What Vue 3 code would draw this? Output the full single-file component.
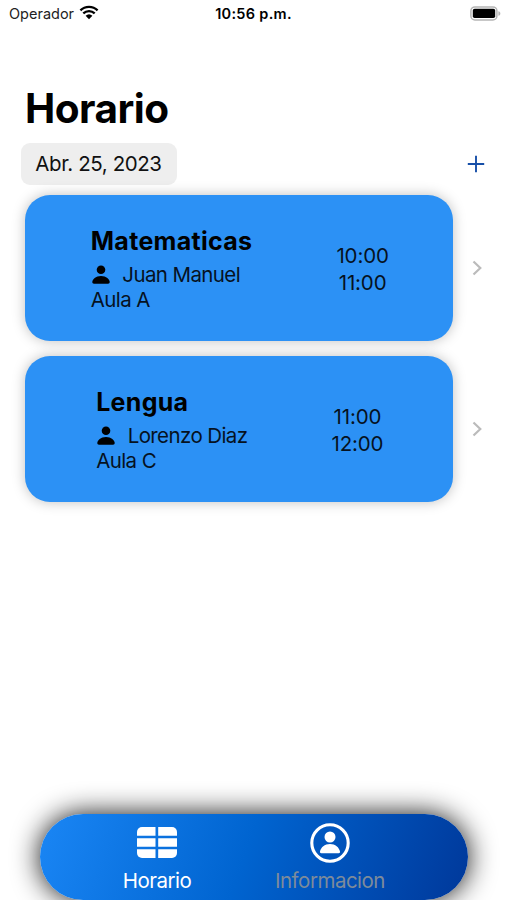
<script setup>
import { ref } from "vue";

const clases = ref([
  { materia: "Matematicas", profesor: "Juan Manuel", aula: "Aula A", inicio: "10:00", fin: "11:00" },
  { materia: "Lengua", profesor: "Lorenzo Diaz", aula: "Aula C", inicio: "11:00", fin: "12:00" },
]);

const tab = ref("horario");
</script>

<template>
  <div class="screen">
    <div class="status-bar">
      <div class="carrier">
        <span>Operador</span>
        <svg class="wifi" viewBox="0 0 20 15">
          <path d="M1.4 5.3a12.4 12.4 0 0 1 17.2 0" />
          <path d="M4.3 8.4a8.2 8.2 0 0 1 11.4 0" />
          <path class="dot" d="M10 14.3 6.6 10.8a5 5 0 0 1 6.8 0z" />
        </svg>
      </div>
      <span class="clock">10:56 p.m.</span>
      <svg class="battery" viewBox="0 0 31 15">
        <rect class="shell" x="0.9" y="0.9" width="26" height="13" rx="4" />
        <rect x="2.8" y="2.8" width="22.4" height="9.2" rx="1.8" />
        <path class="cap" d="M28.4 5.2c2.6.7 2.6 3.9 0 4.6z" />
      </svg>
    </div>

    <h1 class="title">Horario</h1>

    <div class="toolbar">
      <button class="date">Abr. 25, 2023</button>
      <button class="add">
        <svg viewBox="0 0 18 18">
          <path d="M9 .8v16.4M.8 9h16.4" />
        </svg>
      </button>
    </div>

    <div class="list">
      <div v-for="clase in clases" :key="clase.materia" class="row">
        <div class="card">
          <div class="info">
            <h2 class="subject">{{ clase.materia }}</h2>
            <div class="teacher">
              <svg viewBox="0 0 18 19">
                <circle cx="9" cy="4.7" r="4.3" />
                <path d="M2 18.7C.9 18.7.3 18 .3 17c0-2.7 3.5-6 8.7-6s8.7 3.3 8.7 6c0 1-.6 1.7-1.7 1.7z" />
              </svg>
              <span>{{ clase.profesor }}</span>
            </div>
            <div class="room">{{ clase.aula }}</div>
          </div>
          <div class="hours">
            <span>{{ clase.inicio }}</span>
            <span>{{ clase.fin }}</span>
          </div>
        </div>
        <svg class="chevron" viewBox="0 0 10 16">
          <path d="M1.5 1.5 8.3 8l-6.8 6.5" />
        </svg>
      </div>
    </div>

    <nav class="tab-bar">
      <button :class="['tab', { active: tab === 'horario' }]" @click="tab = 'horario'">
        <svg class="grid-icon" viewBox="0 0 40 31">
          <path d="M5 0h13.5v8.7H0V5a5 5 0 0 1 5-5z" />
          <path d="M21.2 0H35a5 5 0 0 1 5 5v3.7H21.2z" />
          <path d="M0 11.2h18.5v8.6H0zM21.2 11.2H40v8.6H21.2z" />
          <path d="M0 22.3h18.5V31H5a5 5 0 0 1-5-5z" />
          <path d="M21.2 22.3H40V26a5 5 0 0 1-5 5H21.2z" />
        </svg>
        <span>Horario</span>
      </button>
      <button :class="['tab', 'wide', { active: tab === 'informacion' }]" @click="tab = 'informacion'">
        <svg class="person-icon" viewBox="0 0 40 40">
          <circle class="ring" cx="20" cy="20" r="18.2" />
          <circle cx="20" cy="14" r="5.5" />
          <path d="M11.3 30.2c-1 0-1.5-.6-1.3-1.6.8-4.2 4.7-7.6 10-7.6s9.2 3.4 10 7.6c.2 1-.3 1.6-1.3 1.6z" />
        </svg>
        <span>Informacion</span>
      </button>
    </nav>
  </div>
</template>

<style>
body {
  background: #fff;
}
</style>

<style scoped>
.screen {
  display: flex;
  flex-direction: column;
  width: 507px;
  height: 900px;
  overflow: hidden;
  background: #fff;
  color: #000;
  font-family: Inter, "Liberation Sans", sans-serif;
}

button {
  border: none;
  background: none;
  padding: 0;
  margin: 0;
  font-family: inherit;
}

.status-bar {
  display: grid;
  grid-template-columns: 1fr auto 1fr;
  align-items: center;
  height: 27px;
  padding: 0 6px 0 9px;
  font-size: 14.5px;
}

.carrier {
  display: flex;
  align-items: center;
  gap: 5px;
  color: #222;
}

.wifi {
  width: 20px;
  height: 15px;
  margin-top: -2px;
  fill: none;
  stroke: #000;
  stroke-width: 2.3;
}

.wifi .dot {
  fill: #000;
  stroke: none;
}

.clock {
  margin-left: -3px;
  font-weight: 600;
  letter-spacing: 0.3px;
}

.battery {
  width: 31px;
  height: 15px;
  margin-top: -1px;
  justify-self: end;
}

.battery .shell {
  fill: #fff;
  stroke: #b5b5b5;
  stroke-width: 1.5;
}

.battery .cap {
  fill: #b5b5b5;
}

.title {
  margin: 57px 0 0 25px;
  font-size: 40.5px;
  line-height: 50px;
  font-weight: 700;
  letter-spacing: -0.5px;
}

.toolbar {
  display: flex;
  align-items: center;
  justify-content: space-between;
  margin-top: 8.5px;
  padding: 0 22px 0 20.5px;
}

.date {
  width: 156px;
  height: 42px;
  border-radius: 9px;
  background: #eee;
  color: #111;
  font-size: 20.5px;
  letter-spacing: -0.4px;
  white-space: nowrap;
}

.add svg {
  display: block;
  width: 18px;
  height: 18px;
  margin-top: 1px;
  fill: none;
  stroke: #174fa8;
  stroke-width: 1.9;
}

.list {
  display: flex;
  flex-direction: column;
  gap: 15px;
  margin-top: 10px;
  padding: 0 25px;
}

.row {
  display: flex;
  align-items: center;
  justify-content: space-between;
}

.card {
  display: flex;
  align-items: center;
  justify-content: center;
  gap: 84px;
  box-sizing: border-box;
  width: 428px;
  height: 146.3px;
  padding-left: 1.5px;
  border-radius: 25px;
  background: #2c91f5;
  box-shadow: 0 0 13px rgba(0, 0, 0, 0.25);
  font-size: 20.5px;
  color: #06121f;
}

.info {
  padding-bottom: 3px;
  letter-spacing: -0.6px;
}

.subject {
  margin: 0;
  font-size: 25px;
  line-height: 34px;
  font-weight: 700;
  letter-spacing: 0.3px;
  color: #000;
}

.teacher {
  display: flex;
  align-items: center;
  gap: 12.5px;
  line-height: 33px;
}

.teacher svg {
  width: 18px;
  height: 19px;
  margin-left: 1px;
  fill: #000;
}

.room {
  line-height: 17px;
}

.hours {
  display: flex;
  flex-direction: column;
  align-items: center;
  padding-top: 2px;
  line-height: 27px;
  letter-spacing: -0.15px;
}

.chevron {
  width: 10px;
  height: 16px;
  fill: none;
  stroke: #bbb;
  stroke-width: 2.2;
}

.tab-bar {
  display: flex;
  align-items: flex-start;
  width: 428px;
  height: 86px;
  margin: auto 0 0 40px;
  flex-shrink: 0;
  border-radius: 43px;
  background: linear-gradient(110deg, #1a86f5 0%, #0064d0 48%, #00389a 100%);
  box-shadow: 0 0 28px rgba(0, 0, 0, 0.95);
}

.tab {
  display: flex;
  flex-direction: column;
  align-items: center;
  width: 110px;
  margin-left: 62px;
  color: #7d8b9a;
  font-size: 20.5px;
  letter-spacing: -0.5px;
}

.tab.wide {
  margin-left: 63px;
}

.tab.active {
  color: #fff;
}

.tab svg {
  fill: #fff;
}

.tab span {
  line-height: 26px;
}

.grid-icon {
  width: 40px;
  height: 31px;
  margin: 13px 0 10px;
}

.person-icon {
  width: 40px;
  height: 40px;
  margin: 9px 0 5px;
}

.person-icon .ring {
  fill: none;
  stroke: #fff;
  stroke-width: 3.1;
}
</style>
